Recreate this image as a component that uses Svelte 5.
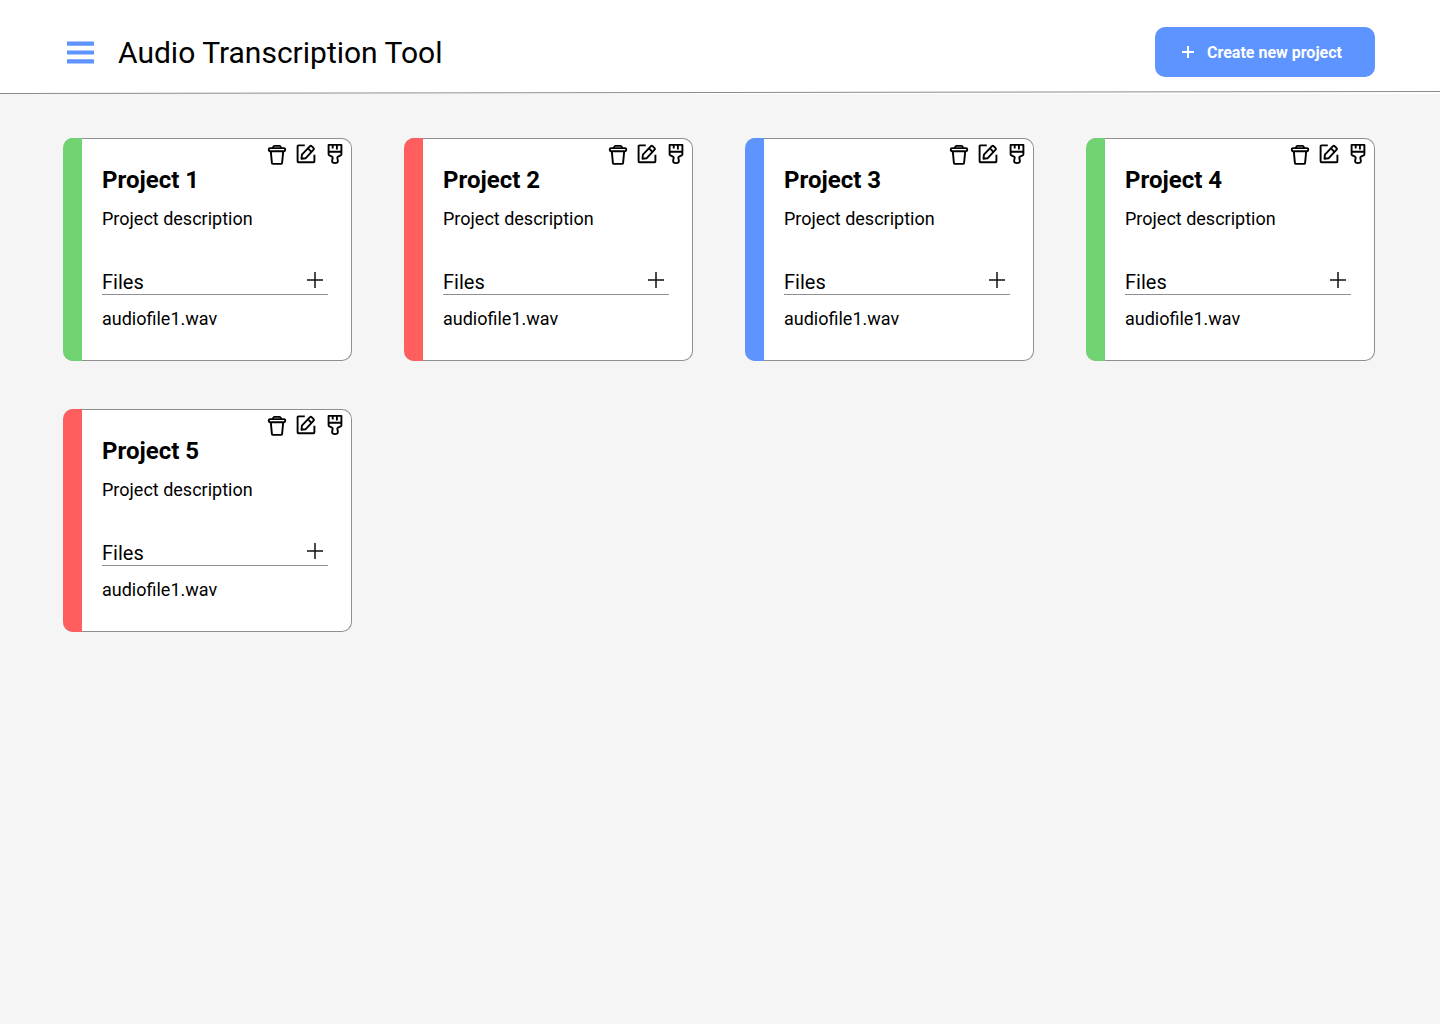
<script>
  const projects = [
    { name: 'Project 1', color: 'green' },
    { name: 'Project 2', color: 'red' },
    { name: 'Project 3', color: 'blue' },
    { name: 'Project 4', color: 'green' },
    { name: 'Project 5', color: 'red' }
  ].map((p) => ({ ...p, description: 'Project description', files: ['audiofile1.wav'] }));
</script>

<div class="page">
  <header>
    <div class="bar">
      <button class="menu" aria-label="Menu">
        <svg width="27" height="23" viewBox="0 0 27 23">
          <path d="M0 .5h27v4.3H0zM0 9.5h27v4H0zM0 18.2h27v4.4H0z" />
        </svg>
      </button>
      <h1>Audio Transcription Tool</h1>
      <button class="create">
        <svg width="12" height="12" viewBox="0 0 12 12">
          <path d="M5 0h2v5h5v2H7v5H5V7H0V5h5z" />
        </svg>
        Create new project
      </button>
    </div>
    <svg class="rule" viewBox="0 0 1440 3" preserveAspectRatio="none">
      <path d="M0 2.5L1440 .5" stroke="#8a8a8a" />
    </svg>
  </header>

  <main>
    {#each projects as project}
      <article class="card {project.color}">
        <div class="actions">
          <button aria-label="Delete {project.name}">
            <svg width="20" height="22" viewBox="0 0 20 22">
              <path d="M5.9 5l.4-1.2q.3-.9 1-.9h5.4q.7 0 1 .9l.4 1.2" />
              <rect x="1.8" y="5.1" width="16.4" height="3.2" rx="1.2" />
              <path d="M3.8 8.4l1.1 11.5q.1 1 1.1 1h8q1 0 1.1-1L16.2 8.4" />
            </svg>
          </button>
          <button aria-label="Edit {project.name}">
            <svg width="20" height="22" viewBox="0 0 20 22">
              <path d="M8.8 2.4H2.5q-.9 0-.9.9v15q0 .9.9.9h15q.9 0 .9-.9v-6.6" />
              <path d="M5.5 15.7l.4-4.1L14 3.1q.8-.8 1.6 0l2 2q.8.8 0 1.6l-8.1 8.6z" />
              <path d="M12 5.4l3.4 3.4" />
            </svg>
          </button>
          <button aria-label="Change color of {project.name}">
            <svg width="20" height="22" viewBox="0 0 20 22">
              <path d="M3.6 1.9h12.8v9.3q0 .8-.8 1.2l-2.6 1.2q-.8.4-.7 1.2l.6 3.1q.1 2.2-2.9 2.2t-2.9-2.2l.6-3.1q.1-.8-.7-1.2l-2.6-1.2q-.8-.4-.8-1.2z" />
              <path d="M3.6 8.8h12.8M7.7 2v3.4M11.9 2v4.6" />
            </svg>
          </button>
        </div>
        <div class="content">
          <h2>{project.name}</h2>
          <p>{project.description}</p>
          <div class="files">
            <h3>Files</h3>
            <button aria-label="Add file to {project.name}">
              <svg width="16" height="16" viewBox="0 0 16 16">
                <path d="M8 0v16M0 8h16" />
              </svg>
            </button>
          </div>
          <ul>
            {#each project.files as file}
              <li>{file}</li>
            {/each}
          </ul>
        </div>
      </article>
    {/each}
  </main>
</div>

<style>
  :global(body) {
    background: #f5f5f5;
  }
  .page {
    font-family: Roboto, 'Liberation Sans', sans-serif;
    color: #000;
  }
  h1, h2, h3, p, ul {
    margin: 0;
    padding: 0;
    font-weight: 400;
  }
  button {
    display: flex;
    align-items: center;
    padding: 0;
    border: 0;
    background: none;
    color: inherit;
    font: inherit;
    cursor: pointer;
  }
  svg {
    display: block;
    fill: none;
  }
  header {
    background: #fff;
  }
  .bar {
    display: flex;
    align-items: center;
    padding: 27px 65px 14px 67px;
  }
  .menu svg,
  .create svg {
    fill: inherit;
  }
  .menu {
    fill: #5d94ff;
  }
  h1 {
    margin-left: 24px;
    padding-top: 2px;
    font-size: 30px;
    line-height: 36px;
  }
  .create {
    margin-left: auto;
    gap: 13px;
    height: 50px;
    width: 220px;
    padding-left: 27px;
    border-radius: 10px;
    background: #5d94ff;
    color: #fff;
    fill: #fff;
    font-size: 16px;
    font-weight: 700;
  }
  .rule {
    width: 100%;
    height: 3px;
  }
  main {
    display: grid;
    grid-template-columns: repeat(4, 1fr);
    gap: 48px 52px;
    padding: 44px 65px 48px 63px;
  }
  .card {
    --accent: #71d271;
    box-sizing: border-box;
    border: 1px solid #8f8f8f;
    border-left: 0;
    border-radius: 10px;
    background: #fff;
    position: relative;
    padding: 4px 0 30px 19px;
  }
  .card::before {
    content: '';
    position: absolute;
    inset: -1px auto -1px 0;
    width: 19px;
    border-radius: 10px 0 0 10px;
    background: var(--accent);
  }
  .red {
    --accent: #ff5e5e;
  }
  .blue {
    --accent: #5d94ff;
  }
  .actions {
    display: flex;
    justify-content: flex-end;
    gap: 9px;
    padding-right: 6px;
  }
  .actions svg {
    stroke: #000;
    stroke-width: 1.9;
    stroke-linejoin: round;
  }
  .content {
    padding: 1px 23px 0 20px;
  }
  h2 {
    font-size: 24px;
    line-height: 28px;
    font-weight: 700;
  }
  p {
    margin-top: 14px;
    font-size: 18px;
    line-height: 22px;
  }
  .files {
    display: flex;
    align-items: flex-start;
    justify-content: space-between;
    margin-top: 40px;
    padding-right: 5px;
    border-bottom: 1px solid #8f8f8f;
  }
  h3 {
    font-size: 20px;
    line-height: 24px;
  }
  .files button {
    padding-top: 2px;
  }
  .files svg {
    stroke: #111;
    stroke-width: 1.5;
  }
  ul {
    list-style: none;
    margin-top: 13px;
    font-size: 18px;
    line-height: 22px;
  }
</style>
